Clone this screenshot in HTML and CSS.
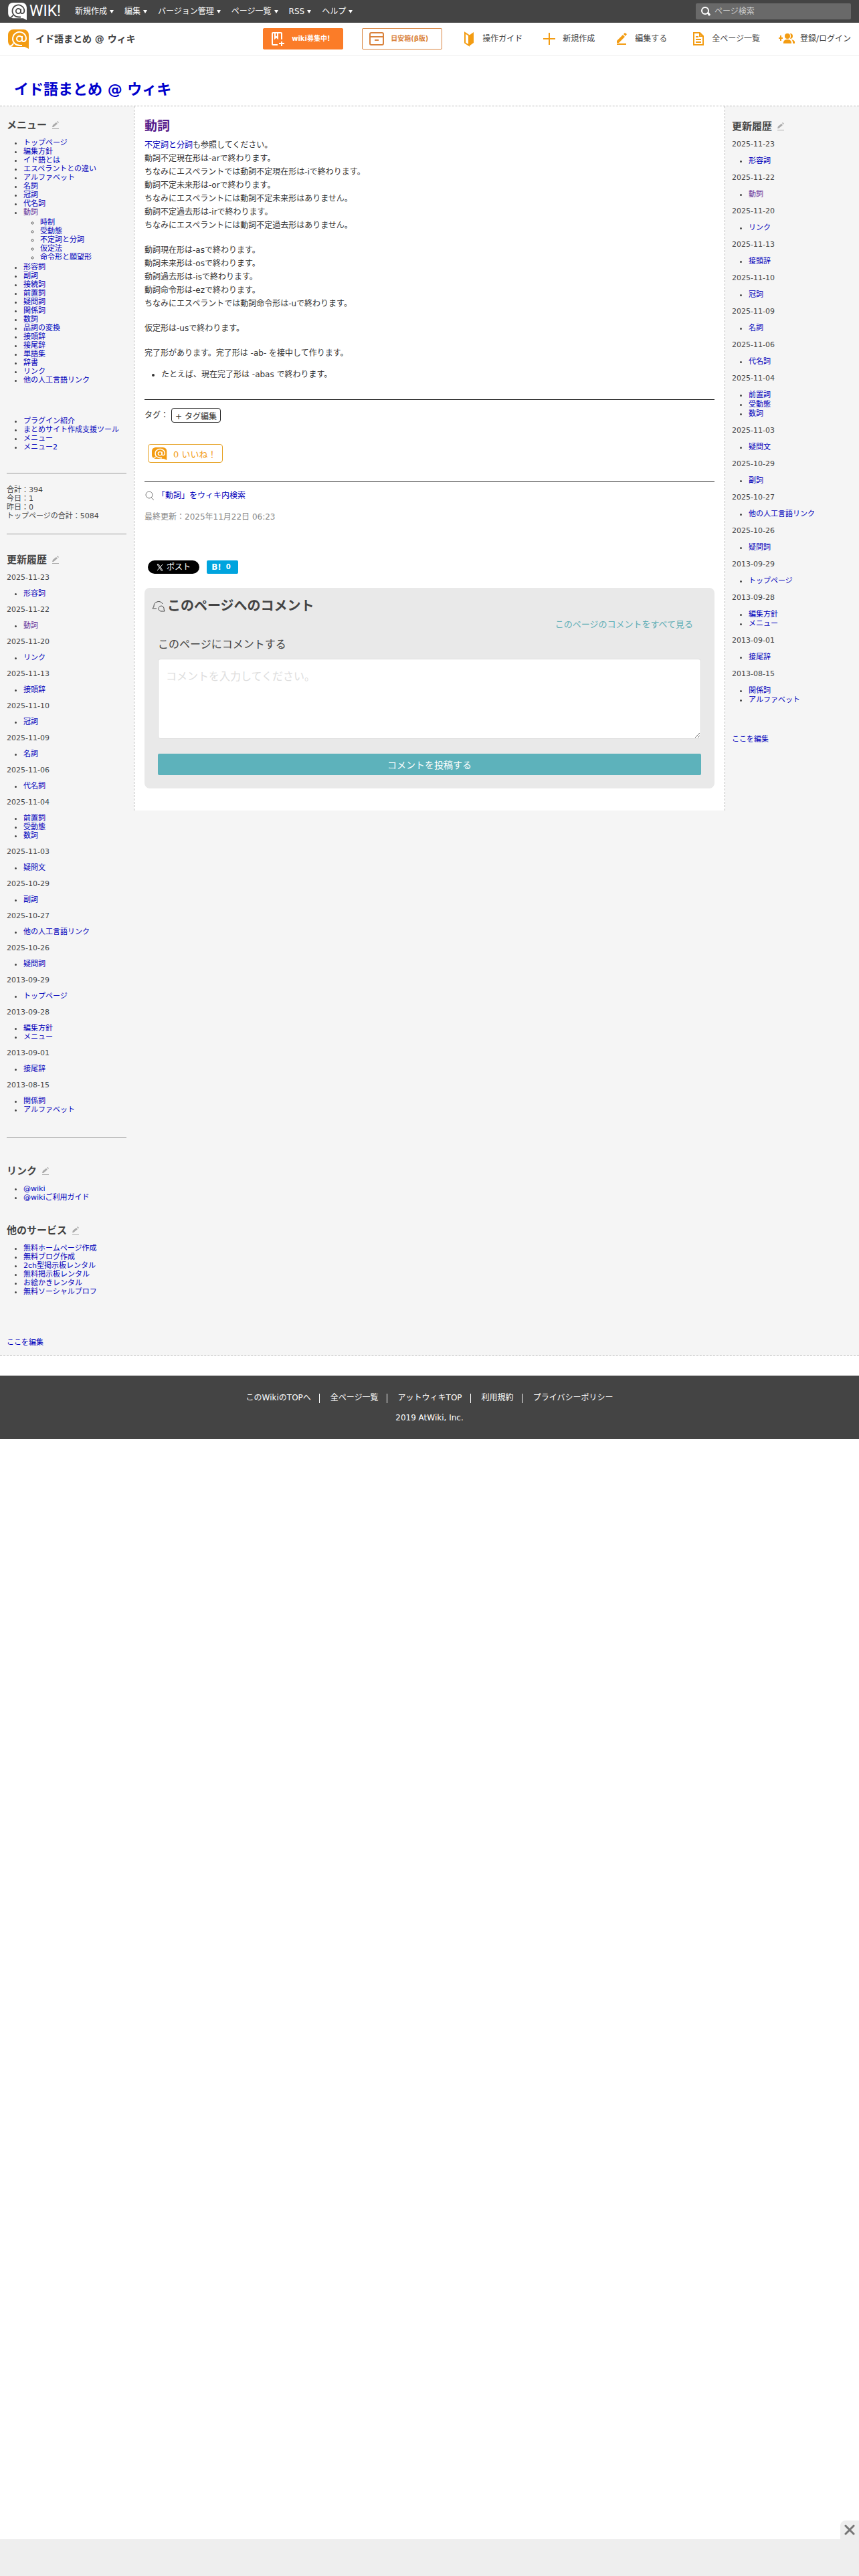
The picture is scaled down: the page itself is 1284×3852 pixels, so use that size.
FILE: index.html
```html
<!DOCTYPE html>
<html lang="ja">
<head>
  <meta charset="UTF-8" />
  <meta name="viewport" content="width=device-width, initial-scale=1.0"/>
  <title>動詞 - イド語まとめ @ ウィキ</title>
  <link rel="stylesheet" href="styles.css">
</head>
<body>

  <!-- Shared icons -->
  <svg class="sprite" width="0" height="0" aria-hidden="true">
    <symbol id="icon-bubble" viewBox="0 0 32 29">
      <path d="M9 0h14a8 8 0 0 1 8 8v21l-6-3H8a8 8 0 0 1-8-8V8a8 8 0 0 1 8-8z" fill="currentColor"/>
      <g fill="none" stroke="var(--mark)" stroke-width="2">
        <circle cx="17" cy="14" r="4"/>
        <path d="M21 10v6q0 2 2 2q4 0 4-5a10 10 0 1 0-17 8q3 3 8 3h3"/>
        <path d="M2 25q4 0 6-4"/>
      </g>
    </symbol>
    <symbol id="icon-pencil" viewBox="0 0 12 12">
      <path d="M1 9l1-3 5-4 2 2-6 5zM8 1l1-1 2 2-1 1zM1 11h10v1H1z" fill="currentColor"/>
    </symbol>
  </svg>

  <!-- Global bar -->
  <nav class="global-bar">
    <a class="atwiki-logo" href="#">
      <svg width="29" height="26"><use href="#icon-bubble"/></svg>
      <span>WIK!</span>
    </a>
    <ul class="global-menu">
      <li><a href="#">新規作成</a></li>
      <li><a href="#">編集</a></li>
      <li><a href="#">バージョン管理</a></li>
      <li><a href="#">ページ一覧</a></li>
      <li><a href="#">RSS</a></li>
      <li><a href="#">ヘルプ</a></li>
    </ul>
    <form class="page-search">
      <svg width="14" height="14" viewBox="0 0 14 14" fill="none" stroke="#fff" stroke-width="2"><circle cx="6" cy="6" r="5"/><path d="M10 9l3 4" stroke-width="3"/></svg>
      <input type="text" placeholder="ページ検索" aria-label="ページ検索">
    </form>
  </nav>

  <!-- Wiki bar -->
  <header class="wiki-bar">
    <a class="brand" href="#">
      <svg width="32" height="29"><use href="#icon-bubble"/></svg>
      <span>イド語まとめ @ ウィキ</span>
    </a>
    <nav class="tools">
      <a class="promo promo-fill" href="#">
        <svg width="22" height="22" viewBox="0 0 22 22" fill="none" stroke="currentColor" stroke-width="2"><path d="M11 20H4q-1 0-1-1V3q0-1 1-1h12q1 0 1 1v9M7 2v8l2-2 2 2V2M17 15v7M13 18h8"/></svg>
        wiki募集中!
      </a>
      <a class="promo" href="#">
        <svg width="22" height="22" viewBox="0 0 22 22" fill="none" stroke="currentColor" stroke-width="2"><rect x="1" y="2" width="20" height="18" rx="2"/><path d="M1 8h20M8 13h6"/></svg>
        目安箱(β版)
      </a>
      <a class="tool" href="#">
        <svg viewBox="0 0 24 24"><path d="M6 3l6 4v15l-6-4z" fill="none" stroke="currentColor" stroke-width="2"/><path d="M12 7l7-5v16l-7 5z" fill="currentColor"/></svg>
        操作ガイド
      </a>
      <a class="tool" href="#">
        <svg viewBox="0 0 24 24" stroke="currentColor" stroke-width="2"><path d="M12 3v18M3 12h18"/></svg>
        新規作成
      </a>
      <a class="tool tool-edit" href="#">
        <svg viewBox="0 0 24 24" fill="currentColor"><path d="M5 18v-3l9-9 3 3-9 9zM15 5l2-2 3 2-2 3zM5 19h14v2H5z"/></svg>
        編集する
      </a>
      <a class="tool" href="#">
        <svg viewBox="0 0 24 24" fill="none" stroke="currentColor" stroke-width="2"><path d="M5 3h9l5 5v13H5zM14 3v5h5M8 9h4M8 13h8M8 17h8"/></svg>
        全ページ一覧
      </a>
      <a class="tool" href="#">
        <svg viewBox="0 0 24 24" fill="currentColor"><circle cx="13" cy="8" r="4"/><path d="M17 4a4 4 0 0 1 0 8q2-4 0-8zM7 19v-2q1-4 6-4t6 4v2zM19 13q5 1 5 4v2h-3v-2q0-2-2-4zM0 10h2V7h2v3h2v2H4v3H2v-3H0z"/></svg>
        登録/ログイン
      </a>
    </nav>
  </header>

  <h1 class="wiki-title"><a href="#">イド語まとめ @ ウィキ</a></h1>

  <div class="columns">

    <!-- Left menu -->
    <aside class="side side-left">
      <h3>メニュー <a href="#" aria-label="メニューを編集"><svg class="pencil"><use href="#icon-pencil"/></svg></a></h3>
      <ul>
        <li><a href="#">トップページ</a></li>
        <li><a href="#">編集方針</a></li>
        <li><a href="#">イド語とは</a></li>
        <li><a href="#">エスペラントとの違い</a></li>
        <li><a href="#">アルファベット</a></li>
        <li><a href="#">名詞</a></li>
        <li><a href="#">冠詞</a></li>
        <li><a href="#">代名詞</a></li>
        <li><a class="current" href="#">動詞</a>
          <ul>
            <li><a href="#">時制</a></li>
            <li><a href="#">受動態</a></li>
            <li><a href="#">不定詞と分詞</a></li>
            <li><a href="#">仮定法</a></li>
            <li><a href="#">命令形と願望形</a></li>
          </ul>
        </li>
        <li><a href="#">形容詞</a></li>
        <li><a href="#">副詞</a></li>
        <li><a href="#">接続詞</a></li>
        <li><a href="#">前置詞</a></li>
        <li><a href="#">疑問詞</a></li>
        <li><a href="#">関係詞</a></li>
        <li><a href="#">数詞</a></li>
        <li><a href="#">品詞の変換</a></li>
        <li><a href="#">接頭辞</a></li>
        <li><a href="#">接尾辞</a></li>
        <li><a href="#">単語集</a></li>
        <li><a href="#">辞書</a></li>
        <li><a href="#">リンク</a></li>
        <li><a href="#">他の人工言語リンク</a></li>
      </ul>
      <ul class="plugin-list">
        <li><a href="#">プラグイン紹介</a></li>
        <li><a href="#">まとめサイト作成支援ツール</a></li>
        <li><a href="#">メニュー</a></li>
        <li><a href="#">メニュー2</a></li>
      </ul>
      <div class="counter">
        合計：394<br>
        今日：1<br>
        昨日：0<br>
        トップページの合計：5084
      </div>
      <h3>更新履歴 <a href="#" aria-label="更新履歴を編集"><svg class="pencil"><use href="#icon-pencil"/></svg></a></h3>
      <div class="history">
        <p>2025-11-23</p>
        <ul><li><a href="#">形容詞</a></li></ul>
        <p>2025-11-22</p>
        <ul><li><a class="current" href="#">動詞</a></li></ul>
        <p>2025-11-20</p>
        <ul><li><a href="#">リンク</a></li></ul>
        <p>2025-11-13</p>
        <ul><li><a href="#">接頭辞</a></li></ul>
        <p>2025-11-10</p>
        <ul><li><a href="#">冠詞</a></li></ul>
        <p>2025-11-09</p>
        <ul><li><a href="#">名詞</a></li></ul>
        <p>2025-11-06</p>
        <ul><li><a href="#">代名詞</a></li></ul>
        <p>2025-11-04</p>
        <ul>
          <li><a href="#">前置詞</a></li>
          <li><a href="#">受動態</a></li>
          <li><a href="#">数詞</a></li>
        </ul>
        <p>2025-11-03</p>
        <ul><li><a href="#">疑問文</a></li></ul>
        <p>2025-10-29</p>
        <ul><li><a href="#">副詞</a></li></ul>
        <p>2025-10-27</p>
        <ul><li><a href="#">他の人工言語リンク</a></li></ul>
        <p>2025-10-26</p>
        <ul><li><a href="#">疑問詞</a></li></ul>
        <p>2013-09-29</p>
        <ul><li><a href="#">トップページ</a></li></ul>
        <p>2013-09-28</p>
        <ul>
          <li><a href="#">編集方針</a></li>
          <li><a href="#">メニュー</a></li>
        </ul>
        <p>2013-09-01</p>
        <ul><li><a href="#">接尾辞</a></li></ul>
        <p>2013-08-15</p>
        <ul>
          <li><a href="#">関係詞</a></li>
          <li><a href="#">アルファベット</a></li>
        </ul>
      </div>
      <hr>
      <h3>リンク <a href="#" aria-label="リンクを編集"><svg class="pencil"><use href="#icon-pencil"/></svg></a></h3>
      <ul>
        <li><a href="#">@wiki</a></li>
        <li><a href="#">@wikiご利用ガイド</a></li>
      </ul>
      <h3 class="service-heading">他のサービス <a href="#" aria-label="他のサービスを編集"><svg class="pencil"><use href="#icon-pencil"/></svg></a></h3>
      <ul>
        <li><a href="#">無料ホームページ作成</a></li>
        <li><a href="#">無料ブログ作成</a></li>
        <li><a href="#">2ch型掲示板レンタル</a></li>
        <li><a href="#">無料掲示板レンタル</a></li>
        <li><a href="#">お絵かきレンタル</a></li>
        <li><a href="#">無料ソーシャルプロフ</a></li>
      </ul>
      <p class="edit-here"><a href="#">ここを編集</a></p>
    </aside>

    <!-- Page body -->
    <main class="content">
      <h2><a class="visited" href="#">動詞</a></h2>
      <p><a href="#">不定詞と分詞</a>も参照してください。<br>
        動詞不定現在形は-arで終わります。<br>
        ちなみにエスペラントでは動詞不定現在形は-iで終わります。<br>
        動詞不定未来形は-orで終わります。<br>
        ちなみにエスペラントには動詞不定未来形はありません。<br>
        動詞不定過去形は-irで終わります。<br>
        ちなみにエスペラントには動詞不定過去形はありません。</p>
      <p>動詞現在形は-asで終わります。<br>
        動詞未来形は-osで終わります。<br>
        動詞過去形は-isで終わります。<br>
        動詞命令形は-ezで終わります。<br>
        ちなみにエスペラントでは動詞命令形は-uで終わります。</p>
      <p>仮定形は-usで終わります。</p>
      <p>完了形があります。完了形は -ab- を接中して作ります。</p>
      <ul class="notes">
        <li>たとえば、現在完了形は -abas で終わります。</li>
      </ul>

      <div class="tags">
        <span>タグ：</span>
        <button type="button">+ タグ編集</button>
      </div>
      <button class="like" type="button">
        <svg width="23" height="19" viewBox="0 0 32 29" preserveAspectRatio="none"><use href="#icon-bubble" width="32" height="29"/></svg>
        0 いいね！
      </button>

      <div class="page-info">
        <a class="search-link" href="#">
          <svg width="15" height="15" viewBox="0 0 15 15" fill="none" stroke="#777"><circle cx="7" cy="6" r="5"/><path d="M10 10l4 4"/></svg>
          「動詞」をウィキ内検索
        </a>
        <div class="updated">最終更新：2025年11月22日 06:23</div>
      </div>

      <div class="share">
        <a class="post" href="#">
          <svg width="10" height="11" viewBox="0 0 10 11" fill="none" stroke="#fff"><path d="M1 1h2l6 9H7zM9 1L1 10"/></svg>
          ポスト
        </a>
        <a class="hatena" href="#"><span>B!</span><span class="count">0</span></a>
      </div>

      <!-- Comments -->
      <section class="comments">
        <h2>
          <svg width="20" height="18" viewBox="0 0 20 18" fill="none" stroke="#444"><path d="M7 13H1l2-3a7 7 0 0 1 13-4"/><path d="M18 14l1 3h-4a4 4 0 1 1 3-3z"/></svg>
          このページへのコメント
        </h2>
        <a class="all-comments" href="#">このページのコメントをすべて見る</a>
        <form>
          <label for="comment">このページにコメントする</label>
          <textarea id="comment" placeholder="コメントを入力してください。"></textarea>
          <button type="button">コメントを投稿する</button>
        </form>
      </section>
    </main>

    <!-- Right menu -->
    <aside class="side side-right">
      <h3>更新履歴 <a href="#" aria-label="更新履歴を編集"><svg class="pencil"><use href="#icon-pencil"/></svg></a></h3>
      <div class="history">
        <p>2025-11-23</p>
        <ul><li><a href="#">形容詞</a></li></ul>
        <p>2025-11-22</p>
        <ul><li><a class="current" href="#">動詞</a></li></ul>
        <p>2025-11-20</p>
        <ul><li><a href="#">リンク</a></li></ul>
        <p>2025-11-13</p>
        <ul><li><a href="#">接頭辞</a></li></ul>
        <p>2025-11-10</p>
        <ul><li><a href="#">冠詞</a></li></ul>
        <p>2025-11-09</p>
        <ul><li><a href="#">名詞</a></li></ul>
        <p>2025-11-06</p>
        <ul><li><a href="#">代名詞</a></li></ul>
        <p>2025-11-04</p>
        <ul>
          <li><a href="#">前置詞</a></li>
          <li><a href="#">受動態</a></li>
          <li><a href="#">数詞</a></li>
        </ul>
        <p>2025-11-03</p>
        <ul><li><a href="#">疑問文</a></li></ul>
        <p>2025-10-29</p>
        <ul><li><a href="#">副詞</a></li></ul>
        <p>2025-10-27</p>
        <ul><li><a href="#">他の人工言語リンク</a></li></ul>
        <p>2025-10-26</p>
        <ul><li><a href="#">疑問詞</a></li></ul>
        <p>2013-09-29</p>
        <ul><li><a href="#">トップページ</a></li></ul>
        <p>2013-09-28</p>
        <ul>
          <li><a href="#">編集方針</a></li>
          <li><a href="#">メニュー</a></li>
        </ul>
        <p>2013-09-01</p>
        <ul><li><a href="#">接尾辞</a></li></ul>
        <p>2013-08-15</p>
        <ul>
          <li><a href="#">関係詞</a></li>
          <li><a href="#">アルファベット</a></li>
        </ul>
      </div>
      <p class="edit-here"><a href="#">ここを編集</a></p>
    </aside>
  </div>

  <footer class="site-footer">
    <ul>
      <li><a href="#">このWikiのTOPへ</a></li>
      <li><a href="#">全ページ一覧</a></li>
      <li><a href="#">アットウィキTOP</a></li>
      <li><a href="#">利用規約</a></li>
      <li><a href="#">プライバシーポリシー</a></li>
    </ul>
    <div>2019 AtWiki, Inc.</div>
  </footer>

  <!-- Sticky ad bar -->
  <div class="ad-bar">
    <button type="button" aria-label="閉じる">
      <svg width="16" height="16" viewBox="0 0 16 16" stroke="#777" stroke-width="3" stroke-linecap="round"><path d="M2 2l12 12M14 2L2 14"/></svg>
    </button>
  </div>

</body>
</html>
```
FILE: styles.css
```css
* {
  box-sizing: border-box;
}

body {
  margin: 0;
  background: #fff;
  color: #444;
  font: 12px/20px "DejaVu Sans", "Noto Sans CJK JP", sans-serif;
}

a {
  color: #0000bb;
  text-decoration: none;
}

ul, p, h1, h2, h3 {
  margin: 0;
  padding: 0;
}

button, input, textarea {
  font-family: inherit;
}

svg {
  flex-shrink: 0;
}

.sprite {
  position: absolute;
}

/* Global bar */
.global-bar {
  display: flex;
  align-items: center;
  height: 34px;
  padding: 0 12px;
  background: #444;
}

.atwiki-logo {
  --mark: #444;
  display: flex;
  align-items: center;
  gap: 3px;
  width: 100px;
  color: #fff;
  font: 23px/24px Roboto, sans-serif;
}

.global-menu {
  display: flex;
  gap: 16px;
  flex: 1;
  list-style: none;
}

.global-menu a {
  display: flex;
  align-items: center;
  gap: 4px;
  color: #fff;
}

.global-menu a::after {
  content: "";
  border: 3px solid transparent;
  border-top: 5px solid #fff;
  border-bottom: 0;
}

.page-search {
  display: flex;
  align-items: center;
  gap: 6px;
  width: 232px;
  height: 24px;
  padding: 0 8px;
  background: #696969;
  border-radius: 2px;
}

.page-search input {
  flex: 1;
  min-width: 0;
  padding: 0;
  border: 0;
  background: none;
  color: #fff;
  font-size: 12px;
}

.page-search input::placeholder {
  color: #ccc;
}

/* Wiki bar */
.wiki-bar {
  display: flex;
  align-items: center;
  justify-content: space-between;
  height: 49px;
  padding: 0 12px;
  border-bottom: 1px solid #eee;
}

.brand {
  --mark: #fff;
  display: flex;
  align-items: center;
  gap: 9px;
  color: #f39c12;
}

.brand span {
  color: #444;
  font-size: 14px;
  font-weight: bold;
}

.tools {
  display: flex;
  align-items: center;
  gap: 28px;
}

.promo {
  display: flex;
  align-items: center;
  gap: 10px;
  width: 120px;
  height: 32px;
  padding: 0 10px;
  border: 1px solid #d9823c;
  border-radius: 2px;
  color: #d9823c;
  font-size: 10px;
  font-weight: bold;
  white-space: nowrap;
}

.promo-fill {
  background: #fb7c28;
  border-color: #fb7c28;
  color: #fff;
}

.tool {
  display: flex;
  align-items: center;
  gap: 8px;
  color: #444;
  white-space: nowrap;
}

.tool svg {
  width: 24px;
  height: 24px;
  color: #f39c12;
}

.tool-edit {
  padding-right: 7px;
}

.wiki-title {
  padding: 37px 21px 10px;
  border-bottom: 1px dashed #bbb;
  font-size: 22px;
  line-height: 28px;
}

.wiki-title a {
  color: #0000cc;
}

/* Columns */
.columns {
  display: flex;
  align-items: flex-start;
  background: #f5f5f5;
  border-bottom: 1px dashed #bbb;
}

.side {
  flex: 0 0 200px;
  padding: 18px 11px 12px 10px;
  font-size: 11px;
  line-height: 13px;
}

.side-right {
  padding-top: 20px;
  line-height: 14px;
}

.side h3 {
  display: flex;
  align-items: center;
  gap: 7px;
  margin-bottom: 10px;
  font-size: 15px;
  line-height: 20px;
}

.side h3 a {
  display: flex;
}

.pencil {
  width: 12px;
  height: 12px;
  color: #aaa;
}

.side ul {
  padding-left: 25px;
}

.side ul ul {
  margin: 2px 0;
}

.side .current {
  color: #663399;
}

.side .plugin-list {
  margin-top: 48px;
}

.side hr {
  margin: 34px 0 40px;
  border: 0;
  border-top: 1px solid #999;
}

.counter {
  margin: 32px 0 28px;
  padding: 18px 0 20px;
  border: solid #999;
  border-width: 1px 0;
}

.history p,
.history ul {
  margin-bottom: 11px;
}

.history ul:last-child {
  margin-bottom: 0;
}

.service-heading {
  margin-top: 33px;
}

.edit-here {
  margin-top: 63px;
}

.side-right .edit-here {
  margin-top: 45px;
}

/* Page body */
.content {
  flex: 1;
  min-width: 0;
  padding: 15px 15px 33px;
  background: #fff;
  border: dashed #bbb;
  border-width: 0 1px;
  color: #333;
}

.content h2 {
  margin-bottom: 5px;
  font-size: 19px;
  line-height: 28px;
}

.content .visited {
  color: #551a8b;
}

.content p {
  margin-bottom: 17px;
}

.content .notes {
  margin: -5px 0 27px;
  padding-left: 25px;
}

.tags {
  display: flex;
  align-items: center;
  gap: 4px;
  padding-top: 12px;
  border-top: 1px solid #222;
}

.tags button {
  height: 22px;
  padding: 0 5px;
  background: #fff;
  border: 1px solid #222;
  border-radius: 4px;
  color: #333;
  font-size: 12px;
}

.like {
  --mark: #fff;
  display: flex;
  align-items: center;
  gap: 9px;
  width: 112px;
  height: 28px;
  margin: 32px 5px 28px;
  padding: 0 5px;
  background: #fff;
  border: 1px solid #e6a020;
  border-radius: 4px;
  color: #f39c12;
  font-size: 13px;
  white-space: nowrap;
}

.page-info {
  padding-top: 10px;
  border-top: 1px solid #222;
}

.search-link {
  display: flex;
  align-items: center;
  gap: 4px;
}

.updated {
  margin-top: 12px;
  color: #888;
}

.share {
  display: flex;
  gap: 11px;
  margin: 55px 5px 21px;
}

.post,
.hatena {
  display: flex;
  align-items: center;
  justify-content: center;
  gap: 5px;
  width: 77px;
  height: 20px;
  background: #000;
  border-radius: 10px;
  color: #fff;
}

.hatena {
  gap: 7px;
  width: 47px;
  padding-right: 4px;
  background: #00a4de;
  border-radius: 2px;
  font-weight: bold;
}

.hatena .count {
  font-size: 10px;
}

/* Comments */
.comments {
  padding: 13px 20px 20px;
  background: #e9e9e9;
  border-radius: 8px;
  color: #444;
}

.comments h2 {
  display: flex;
  align-items: center;
  gap: 3px;
  margin: 0 0 4px -9px;
  font-size: 20px;
}

.all-comments {
  display: block;
  padding-right: 12px;
  color: #5faeb6;
  font-size: 13px;
  text-align: right;
}

.comments form {
  display: flex;
  flex-direction: column;
  margin-top: 10px;
}

.comments label {
  font-size: 16px;
}

.comments textarea {
  height: 120px;
  margin: 11px 0 22px;
  padding: 12px 11px;
  border: 1px solid #ddd;
  border-radius: 4px;
  font-size: 16px;
  resize: vertical;
}

.comments textarea::placeholder {
  color: #ddd;
}

.comments button {
  height: 32px;
  background: #5db2bb;
  border: 0;
  border-radius: 2px;
  color: #fff;
  font-size: 14px;
}

/* Footer */
.site-footer {
  margin-top: 30px;
  padding: 23px 0 22px;
  background: #444;
  color: #fff;
  text-align: center;
}

.site-footer ul {
  display: flex;
  align-items: center;
  justify-content: center;
  margin-bottom: 10px;
  list-style: none;
}

.site-footer li + li::before {
  content: "";
  display: inline-block;
  height: 14px;
  margin: 0 16px 0 12px;
  border-left: 1px solid #fff;
  vertical-align: middle;
}

.site-footer a {
  color: #fff;
}

/* Sticky ad bar */
.ad-bar {
  position: fixed;
  right: 0;
  bottom: 0;
  left: 0;
  height: 55px;
  background: #eee;
}

.ad-bar button {
  position: absolute;
  right: 0;
  bottom: 100%;
  display: flex;
  align-items: center;
  justify-content: center;
  width: 28px;
  height: 28px;
  padding: 0;
  background: #eee;
  border: 0;
  border-radius: 8px 0 0 0;
}
```
